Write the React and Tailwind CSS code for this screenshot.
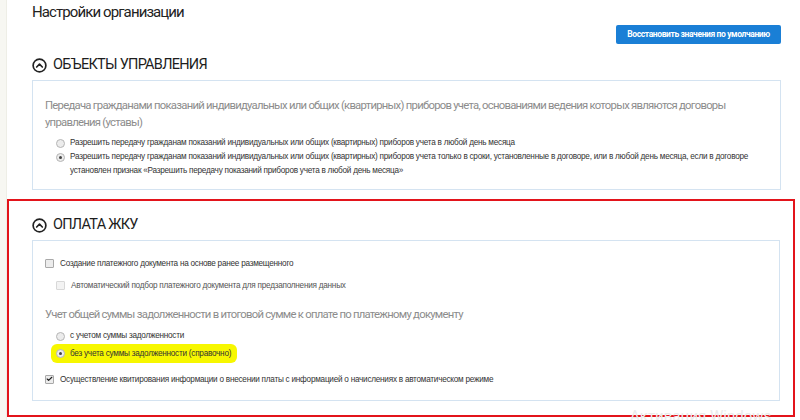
import { Check } from 'lucide-react'

function CollapseIcon() {
  return (
    <svg width="15" height="15" viewBox="0 0 16 16" fill="none" stroke="#222" strokeWidth="1.8" className="shrink-0">
      <circle cx="8" cy="8" r="6.8" />
      <path d="M5 9.6 8 6.6l3 3" strokeLinecap="round" strokeLinejoin="round" />
    </svg>
  )
}

function Radio({ checked, label }) {
  return (
    <div className="flex items-start gap-[5px]">
      <span className="mt-[2.5px] flex h-[9px] w-[9px] shrink-0 items-center justify-center rounded-full border border-[#b5b5b5] bg-[#ececec]">
        {checked && <span className="h-[3px] w-[3px] rounded-full bg-[#444]" />}
      </span>
      <span>{label}</span>
    </div>
  )
}

function Box({ checked, disabled, label }) {
  return (
    <div className="flex items-start gap-[6px]">
      <span className={`mt-[2px] flex h-[9px] w-[9px] shrink-0 items-center justify-center rounded-[1px] border ${disabled ? 'border-[#d8d8d8] bg-[#f3f3f3]' : 'border-[#a9a9a9] bg-[#ececec]'}`}>
        {checked && <Check size={8} strokeWidth={4} className="text-[#222]" />}
      </span>
      <span>{label}</span>
    </div>
  )
}

function Section({ title, children }) {
  return (
    <div>
      <div className="flex h-[16px] items-center gap-[6px] font-['Roboto',sans-serif] text-[14.5px] tracking-[-0.05em] text-[#1d1d1d]">
        <CollapseIcon />
        <span>{title}</span>
      </div>
      <div className="mt-[7px] border border-[#d4e3f1] bg-white">
        {children}
      </div>
    </div>
  )
}

const groupTitle = "font-['Roboto',sans-serif] text-[11.3px] leading-[17px] tracking-[-0.065em] text-[#8c8c8c]"
const optText = "font-['Liberation_Sans',Arial,sans-serif] text-[8.2px] leading-[13px] tracking-[-0.03em] text-[#333]"

export default function App() {
  return (
    <div className="relative h-[420px] w-[800px] overflow-hidden bg-white">
      <div className="absolute left-0 top-0 h-full w-[7px] border-r border-[#eeeee6] bg-[#f7f7f2]" />

      <div className="pl-[32px] pr-[19px] pt-[1px]">
        <h1 className="font-['Roboto',sans-serif] text-[15px] leading-[22px] tracking-[-0.06em] text-[#222]">
          Настройки организации
        </h1>
        <div className="mt-[2px] flex justify-end">
          <button className="h-[19px] w-[165px] rounded-[2px] bg-[#1a7fd6] font-['Roboto',sans-serif] text-[8.5px] font-bold tracking-[-0.045em] text-white">
            Восстановить значения по умолчанию
          </button>
        </div>

        <div className="mt-[13px]">
          <Section title="ОБЪЕКТЫ УПРАВЛЕНИЯ">
            <div className="px-[12px] pt-[16px] pb-[11px]">
              <div className={groupTitle}>
                Передача гражданами показаний индивидуальных или общих (квартирных) приборов учета, основаниями ведения которых являются договоры управления (уставы)
              </div>
              <div className={`mt-[5px] pl-[11px] leading-[14px] ${optText}`}>
                <Radio label="Разрешить передачу гражданам показаний индивидуальных или общих (квартирных) приборов учета в любой день месяца" />
                <Radio checked label="Разрешить передачу гражданам показаний индивидуальных или общих (квартирных) приборов учета только в сроки, установленные в договоре, или в любой день месяца, если в договоре установлен признак «Разрешить передачу показаний приборов учета в любой день месяца»" />
              </div>
            </div>
          </Section>
        </div>
      </div>

      <div className="ml-[7px] mr-[5px] mt-[9px] border-2 border-[#e3141b] pl-[23px] pr-[13px] pt-[16px] pb-[14px]">
        <Section title="ОПЛАТА ЖКУ">
          <div className={`px-[12px] pt-[16px] pb-[14px] ${optText}`}>
            <Box label="Создание платежного документа на основе ранее размещенного" />
            <div className="mt-[9px] pl-[11px] text-[#555]">
              <Box disabled label="Автоматический подбор платежного документа для предзаполнения данных" />
            </div>
            <div className={`mt-[14px] ${groupTitle}`}>
              Учет общей суммы задолженности в итоговой сумме к оплате по платежному документу
            </div>
            <div className="mt-[6px] space-y-[4px] pl-[11px]">
              <Radio label="с учетом суммы задолженности" />
              <div className="-my-[3px] -ml-[5px] inline-block rounded-[6px] bg-[#f7f700] py-[3px] pl-[5px] pr-[6px]">
                <Radio checked label="без учета суммы задолженности (справочно)" />
              </div>
            </div>
            <div className="mt-[13px]">
              <Box checked label="Осуществление квитирования информации о внесении платы с информацией о начислениях в автоматическом режиме" />
            </div>
          </div>
        </Section>
      </div>

      <div className="pointer-events-none absolute left-[630px] top-[405px] font-['Roboto',sans-serif] text-[15px] text-[#ebebeb]">
        Активация Windows
      </div>
    </div>
  )
}
